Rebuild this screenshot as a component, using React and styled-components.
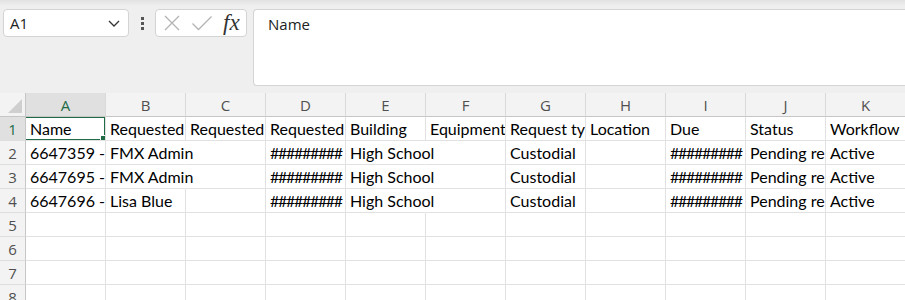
import styled, { createGlobalStyle } from "styled-components";

const GlobalStyle = createGlobalStyle`
  html, body {
    margin: 0;
    background: #efefef;
    font-family: "Lato", "Liberation Sans", sans-serif;
    overflow: hidden;
  }
`;

const Page = styled.div`
  width: 905px;
  height: 300px;
  overflow: hidden;
`;

const FormulaRow = styled.div`
  display: flex;
  align-items: flex-start;
  height: 93px;
  box-sizing: border-box;
  padding: 9px 0 0 3px;
  background: linear-gradient(#e2e2e2 0, #efefef 6px);
`;

const NameBox = styled.div`
  width: 126px;
  height: 28px;
  box-sizing: border-box;
  display: flex;
  align-items: center;
  justify-content: space-between;
  padding: 0 6px 0 6px;
  background: #fff;
  border: 1px solid #d4d4d4;
  border-radius: 4px;
  font-family: "Open Sans", sans-serif;
  font-size: 15px;
  color: #222;
`;

const Dots = styled.div`
  width: 26px;
  height: 28px;
  display: flex;
  flex-direction: column;
  align-items: center;
  justify-content: center;
  gap: 2px;

  span {
    width: 3px;
    height: 3px;
    background: #555;
  }
`;

const FuncBox = styled.div`
  width: 92px;
  height: 28px;
  box-sizing: border-box;
  display: flex;
  align-items: center;
  gap: 10px;
  padding: 0 4px 0 7px;
  background: #fff;
  border: 1px solid #d4d4d4;
  border-radius: 4px;
`;

const Fx = styled.span`
  font-family: "Liberation Serif", serif;
  font-style: italic;
  font-size: 23px;
  color: #333;
  line-height: 1;
  margin-top: -2px;
`;

const FormulaInput = styled.div`
  flex: 1;
  height: 77px;
  margin-left: 6px;
  box-sizing: border-box;
  padding: 4px 14px;
  background: #fff;
  border: 1px solid #d4d4d4;
  border-right: none;
  border-radius: 4px 0 0 4px;
  font-family: "Open Sans", sans-serif;
  font-size: 15px;
  color: #222;
`;

const Sheet = styled.div`
  display: grid;
  grid-template-columns: 26px repeat(11, 80px);
  grid-auto-rows: 24px;
  background: #fff;
`;

const Corner = styled.div`
  background: #f3f3f3;
  border-right: 1px solid #c6c6c6;
  border-bottom: 1px solid #c6c6c6;
  display: flex;
  align-items: flex-end;
  justify-content: flex-end;
  padding: 0 3px 3px 0;

  &::after {
    content: "";
    width: 0;
    height: 0;
    border-left: 14px solid transparent;
    border-bottom: 14px solid #cfcfcf;
  }
`;

const ColHead = styled.div`
  background: ${(p) => (p.$active ? "#e0e0e0" : "#f3f3f3")};
  color: ${(p) => (p.$active ? "#1d6b45" : "#505050")};
  border-right: 1px solid #dadada;
  border-bottom: 1px solid #c6c6c6;
  display: flex;
  align-items: center;
  justify-content: center;
  font-family: "Open Sans", sans-serif;
  font-size: 15px;
  box-sizing: border-box;
`;

const RowHead = styled.div`
  background: ${(p) => (p.$active ? "#e0e0e0" : "#f3f3f3")};
  color: ${(p) => (p.$active ? "#1d6b45" : "#505050")};
  border-right: 1px solid #c6c6c6;
  border-bottom: 1px solid #dedede;
  display: flex;
  align-items: center;
  justify-content: center;
  font-family: "Open Sans", sans-serif;
  font-size: 15px;
`;

const Cell = styled.div`
  position: relative;
  box-sizing: border-box;
  border-right: 1px solid ${(p) => (p.$spill ? "transparent" : "#e1e1e1")};
  border-bottom: 1px solid #e1e1e1;
  padding: 0 0 0 4px;
  white-space: nowrap;
  overflow: ${(p) => (p.$spill ? "visible" : "hidden")};
  z-index: ${(p) => (p.$spill ? 1 : 0)};
  font-size: 16px;
  line-height: 24px;
  letter-spacing: ${(p) => (p.$hash ? "-1.3px" : "normal")};
  color: #000;
`;

const Selection = styled.div`
  position: absolute;
  inset: -1px -1px -1px -2px;
  border: 2px solid #1f6c46;
  pointer-events: none;

  &::after {
    content: "";
    position: absolute;
    right: -4px;
    bottom: -4px;
    width: 6px;
    height: 6px;
    background: #1f6c46;
    border: 1px solid #fff;
  }
`;

const columns = ["A", "B", "C", "D", "E", "F", "G", "H", "I", "J", "K"];

const rows = [
  ["Name", "Requested", "Requested", "Requested", "Building", "Equipment", "Request ty", "Location", "Due", "Status", "Workflow"],
  ["6647359 -", "FMX Admin", "", "#########", "High School", "", "Custodial", "", "#########", "Pending re", "Active"],
  ["6647695 -", "FMX Admin", "", "#########", "High School", "", "Custodial", "", "#########", "Pending re", "Active"],
  ["6647696 -", "Lisa Blue", "", "#########", "High School", "", "Custodial", "", "#########", "Pending re", "Active"],
  [],
  [],
  [],
  [],
];

// text spills into the next cell only if it is wider than its own cell and the next is empty
const spills = { "1-1": true, "2-1": true, "1-4": true, "2-4": true, "3-4": true };

function ChevronDown() {
  return (
    <svg width="16" height="16" viewBox="0 0 16 16" fill="none" stroke="#333" strokeWidth="1.3">
      <path d="M3 6l5 5 5-5" />
    </svg>
  );
}

function CancelIcon() {
  return (
    <svg width="18" height="18" viewBox="0 0 18 18" fill="none" stroke="#b3b3b3" strokeWidth="1.3">
      <path d="M2 2l14 14M16 2L2 16" />
    </svg>
  );
}

function EnterIcon() {
  return (
    <svg width="22" height="18" viewBox="0 0 22 18" fill="none" stroke="#b3b3b3" strokeWidth="1.3">
      <path d="M1.5 9.5l6 6L20.5 2.5" />
    </svg>
  );
}

export default function App() {
  return (
    <Page>
      <GlobalStyle />
      <FormulaRow>
        <NameBox>
          A1
          <ChevronDown />
        </NameBox>
        <Dots>
          <span />
          <span />
          <span />
        </Dots>
        <FuncBox>
          <CancelIcon />
          <EnterIcon />
          <Fx>fx</Fx>
        </FuncBox>
        <FormulaInput>Name</FormulaInput>
      </FormulaRow>
      <Sheet>
        <Corner />
        {columns.map((c) => (
          <ColHead key={c} $active={c === "A"}>
            {c}
          </ColHead>
        ))}
        {rows.map((row, r) => [
          <RowHead key={`h${r}`} $active={r === 0}>
            {r + 1}
          </RowHead>,
          ...columns.map((c, ci) => (
            <Cell
              key={`${r}-${ci}`}
              $spill={spills[`${r}-${ci}`]}
              $hash={(row[ci] || "").startsWith("#")}
            >
              {row[ci] || ""}
              {r === 0 && ci === 0 && <Selection />}
            </Cell>
          )),
        ])}
      </Sheet>
    </Page>
  );
}
